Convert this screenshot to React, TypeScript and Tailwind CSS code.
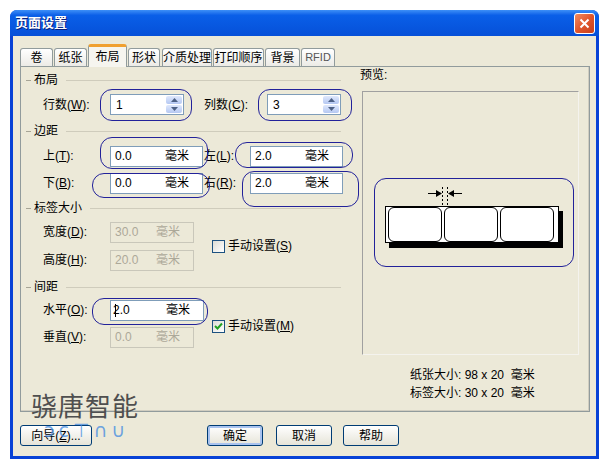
import React from "react";

const FONT = "font-['Liberation_Sans','Noto_Sans_CJK_SC',sans-serif]";

function Header({ title, h }: { title: string; h: string }) {
  return (
    <div className={`flex items-center ${h}`}>
      <span className="ml-[5px] h-px w-[5px] bg-[#a7a596]" />
      <span className="ml-[3px]">{title}</span>
      <span className="ml-[8px] mr-[16px] h-px flex-1 bg-[#cfccbc]" />
    </div>
  );
}

function Label({ text, k }: { text: string; k: string }) {
  return (
    <span className="w-[67px] shrink-0 whitespace-nowrap">
      {text}(<span className="underline">{k}</span>):
    </span>
  );
}

function SpinBox({ value }: { value: string }) {
  return (
    <div className="flex h-[21px] w-[74px] items-center border border-[#7f9db9] bg-white pl-[5px] pr-px">
      <span className="flex-1">{value}</span>
      <div className="flex h-[17px] w-[16px] flex-col gap-px">
        <div className="flex flex-1 items-center justify-center rounded-[2px] bg-linear-to-b from-[#dfe8fc] to-[#b5c8f2]">
          <svg width="7" height="4" viewBox="0 0 7 4">
            <path d="M0 4 L3.5 0 L7 4 Z" fill="#4d6185" />
          </svg>
        </div>
        <div className="flex flex-1 items-center justify-center rounded-[2px] bg-linear-to-b from-[#dfe8fc] to-[#b5c8f2]">
          <svg width="7" height="4" viewBox="0 0 7 4">
            <path d="M0 0 L3.5 4 L7 0 Z" fill="#4d6185" />
          </svg>
        </div>
      </div>
    </div>
  );
}

function MmBox({ value, w, disabled }: { value: string; w: string; disabled?: boolean }) {
  return (
    <div
      className={`flex h-[21px] items-center justify-between pl-[4px] pr-[13px] ${w} ${
        disabled ? "border border-[#c9c7ba] text-[#aca899]" : "border border-[#7f9db9] bg-white"
      }`}
    >
      <span>{value}</span>
      <span>毫米</span>
    </div>
  );
}

function Check({ checked, text, k }: { checked?: boolean; text: string; k: string }) {
  return (
    <div className="flex items-center">
      <div className="flex h-[13px] w-[13px] items-center justify-center border border-[#1c5180] bg-linear-to-br from-[#dcdcd5] to-white">
        {checked && (
          <svg width="9" height="9" viewBox="0 0 9 9">
            <path d="M1 4 L3.5 6.5 L8 1.5" stroke="#21a121" strokeWidth="2" fill="none" />
          </svg>
        )}
      </div>
      <span className="ml-[3px]">
        {text}(<span className="underline">{k}</span>)
      </span>
    </div>
  );
}

function Btn({ text, w, def }: { text: React.ReactNode; w: string; def?: boolean }) {
  return (
    <div
      className={`flex h-[21px] items-center justify-center rounded-[3px] border border-[#003c74] bg-linear-to-b from-white to-[#e6e4d8] ${w} ${
        def ? "shadow-[inset_0_0_0_2px_#a9c3ef]" : ""
      }`}
    >
      {text}
    </div>
  );
}

function Mark({ c }: { c: string }) {
  return <div className={`absolute rounded-[12px] border-[1.5px] border-[#22229a] ${c}`} />;
}

export default function App() {
  return (
    <div className={`relative h-[466px] w-[612px] bg-white pl-[10px] pt-[10px] text-[12px] text-black ${FONT}`}>
      <div className="flex h-[449px] w-[589px] flex-col overflow-hidden rounded-t-[7px] bg-[#0842d6]">
        {/* title bar */}
        <div className="flex h-[26px] shrink-0 items-center bg-linear-to-b from-[#3d8ff7] via-[#0a5fe8] via-20% to-[#0650d8] pl-[5px] pr-[4px]">
          <span className="flex-1 text-[13px] font-bold text-white [text-shadow:1px_1px_0_#0a1f7a]">
            页面设置
          </span>
          <div className="flex h-[21px] w-[21px] items-center justify-center rounded-[3px] border border-white bg-linear-to-br from-[#f08a60] via-[#e0562c] to-[#c8401c]">
            <svg width="11" height="11" viewBox="0 0 11 11">
              <path d="M1.5 1.5 L9.5 9.5 M9.5 1.5 L1.5 9.5" stroke="white" strokeWidth="2" />
            </svg>
          </div>
        </div>

        {/* body */}
        <div className="mx-[3px] mb-[3px] flex flex-1 flex-col bg-[#ece9d8] pl-[7px] pt-[9px]">
          {/* tabs */}
          <div className="flex h-[21px] items-end">
            <div className="flex h-[18px] w-[33px] items-center justify-center rounded-t-[3px] border border-b-0 border-[#919b9c] bg-linear-to-b from-white to-[#ecebe6]">卷</div>
            <div className="ml-px flex h-[18px] w-[33px] items-center justify-center rounded-t-[3px] border border-b-0 border-[#919b9c] bg-linear-to-b from-white to-[#ecebe6]">纸张</div>
            <div className="relative z-10 -mb-px ml-px flex h-[23px] w-[39px] items-start justify-center rounded-t-[3px] border border-b-0 border-[#919b9c] border-t-[3px] border-t-[#f0a030] bg-[#f6f5ef] pt-[1px]">布局</div>
            <div className="ml-[1px] flex h-[18px] w-[32px] items-center justify-center rounded-t-[3px] border border-b-0 border-[#919b9c] bg-linear-to-b from-white to-[#ecebe6]">形状</div>
            <div className="ml-[2px] flex h-[18px] w-[50px] items-center justify-center rounded-t-[3px] border border-b-0 border-[#919b9c] bg-linear-to-b from-white to-[#ecebe6]">介质处理</div>
            <div className="ml-px flex h-[18px] w-[51px] items-center justify-center rounded-t-[3px] border border-b-0 border-[#919b9c] bg-linear-to-b from-white to-[#ecebe6]">打印顺序</div>
            <div className="ml-px flex h-[18px] w-[35px] items-center justify-center rounded-t-[3px] border border-b-0 border-[#919b9c] bg-linear-to-b from-white to-[#ecebe6]">背景</div>
            <div className="ml-px flex h-[18px] w-[34px] items-center justify-center rounded-t-[3px] border border-b-0 border-[#919b9c] bg-linear-to-b from-white to-[#ecebe6] text-[11px] text-[#555]">RFID</div>
          </div>

          {/* panel */}
          <div className="relative flex h-[346px] w-[570px] border border-[#919b9c] bg-[#ece9d8] shadow-[inset_-1px_-1px_0_#d0cdc0]">
            {/* left column */}
            <div className="flex w-[336px] flex-col pt-[4px]">
              <Header title="布局" h="h-[18px]" />
              <div className="flex h-[31px] items-center pl-[22px]">
                <Label text="行数" k="W" />
                <SpinBox value="1" />
                <span className="ml-[20px] w-[63px] shrink-0 whitespace-nowrap">
                  列数(<span className="underline">C</span>):
                </span>
                <SpinBox value="3" />
              </div>
              <Header title="边距" h="h-[22px]" />
              <div className="flex h-[28px] items-center pl-[22px]">
                <Label text="上" k="T" />
                <MmBox value="0.0" w="w-[93px]" />
                <span className="ml-px w-[46px] shrink-0 whitespace-nowrap">
                  左(<span className="underline">L</span>):
                </span>
                <MmBox value="2.0" w="w-[93px]" />
              </div>
              <div className="flex h-[26px] items-center pl-[22px]">
                <Label text="下" k="B" />
                <MmBox value="0.0" w="w-[93px]" />
                <span className="ml-px w-[46px] shrink-0 whitespace-nowrap">
                  右(<span className="underline">R</span>):
                </span>
                <MmBox value="2.0" w="w-[93px]" />
              </div>
              <Header title="标签大小" h="h-[24px]" />
              <div className="flex items-center pl-[22px]">
                <div className="flex flex-col">
                  <div className="flex h-[24px] items-center">
                    <Label text="宽度" k="D" />
                    <MmBox value="30.0" w="w-[84px]" disabled />
                  </div>
                  <div className="flex h-[32px] items-center">
                    <Label text="高度" k="H" />
                    <MmBox value="20.0" w="w-[84px]" disabled />
                  </div>
                </div>
                <div className="ml-[18px] -mt-[4px]">
                  <Check text="手动设置" k="S" />
                </div>
              </div>
              <Header title="间距" h="h-[22px]" />
              <div className="flex items-center pl-[22px]">
                <div className="flex flex-col">
                  <div className="flex h-[24px] items-center">
                    <Label text="水平" k="O" />
                    <div className="flex h-[21px] w-[94px] items-center justify-between border border-[#7f9db9] bg-white pl-[4px] pr-[13px]">
                      <span>
                        <span className="mr-[-3px] inline-block h-[13px] w-px bg-black align-middle" />2.0
                      </span>
                      <span>毫米</span>
                    </div>
                  </div>
                  <div className="flex h-[30px] items-center">
                    <Label text="垂直" k="V" />
                    <MmBox value="0.0" w="w-[84px]" disabled />
                  </div>
                </div>
                <div className="ml-[8px] mt-[2px]">
                  <Check checked text="手动设置" k="M" />
                </div>
              </div>
            </div>

            {/* right column */}
            <div className="flex flex-1 flex-col">
              <div className="ml-[3px] flex h-[16px] items-center">预览:</div>
              <div className="ml-[5px] mt-[8px] flex h-[264px] w-[217px] flex-col border border-[#a0a0a0] border-b-[#f4f3ee] border-r-[#f4f3ee] pl-[22px] pt-[114px]">
                <div className="relative flex h-[37px] w-[174px] gap-[2px] border border-black bg-white px-[2px] shadow-[4px_5px_0_#000]">
                  <div className="w-[54px] rounded-[6px] border border-black bg-white" />
                  <div className="w-[54px] rounded-[6px] border border-black bg-white" />
                  <div className="w-[54px] rounded-[6px] border border-black bg-white" />
                  <svg className="absolute left-[42px] top-[-21px]" width="34" height="21" viewBox="0 0 34 21">
                    <path d="M0 7.5 H10" stroke="black" strokeWidth="1" />
                    <path d="M8 4 L14 7.5 L8 11 Z" fill="black" />
                    <path d="M24 7.5 H34" stroke="black" strokeWidth="1" />
                    <path d="M26 4 L20 7.5 L26 11 Z" fill="black" />
                    <path d="M14.5 1 V21 M19.5 1 V21" stroke="black" strokeWidth="1" strokeDasharray="2 2" />
                  </svg>
                </div>
              </div>
              <div className="mt-[11px] flex flex-col pl-[53px]">
                <div className="flex h-[18px] items-center whitespace-pre">纸张大小: 98 x 20  毫米</div>
                <div className="flex h-[18px] items-center whitespace-pre">标签大小: 30 x 20  毫米</div>
              </div>
            </div>

            {/* annotation marks */}
            <Mark c="left-[79px] top-[22px] h-[32px] w-[92px]" />
            <Mark c="left-[237px] top-[22px] h-[32px] w-[94px]" />
            <Mark c="left-[79px] top-[70px] h-[32px] w-[108px]" />
            <Mark c="left-[214px] top-[75px] h-[26px] w-[118px]" />
            <Mark c="left-[71px] top-[106px] h-[25px] w-[118px]" />
            <Mark c="left-[221px] top-[104px] h-[36px] w-[117px]" />
            <Mark c="left-[71px] top-[231px] h-[27px] w-[116px]" />
            <Mark c="left-[353px] top-[111px] h-[89px] w-[200px]" />
          </div>

          {/* buttons */}
          <div className="mt-[13px] flex items-center">
            <Btn w="w-[72px]" text={<span>向导(<span className="underline">Z</span>)...</span>} />
            <div className="ml-[115px]">
              <Btn w="w-[56px]" text="确定" def />
            </div>
            <div className="ml-[13px]">
              <Btn w="w-[56px]" text="取消" />
            </div>
            <div className="ml-[11px]">
              <Btn w="w-[56px]" text="帮助" />
            </div>
          </div>
        </div>
      </div>

      {/* watermark */}
      <div className="pointer-events-none absolute left-[31px] top-[392px] font-['Noto_Sans_CJK_SC',sans-serif] text-[26px] leading-none tracking-[1px] text-[#4f4f4f]">
        骁唐智能
      </div>
      <div className="pointer-events-none absolute left-[44px] top-[421px] font-['DejaVu_Sans',sans-serif] text-[19px] leading-none tracking-[4px] text-[#4a8fe0]/80">
        ɔc⊤∩∪
      </div>
    </div>
  );
}
